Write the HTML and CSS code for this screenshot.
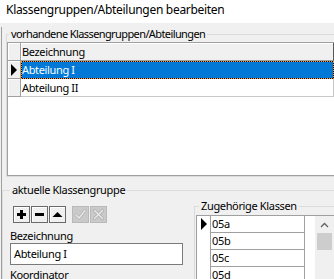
FILE: index.html
```html
<!DOCTYPE html>
<html lang="de">
<head>
<meta charset="utf-8">
<title>Klassengruppen/Abteilungen bearbeiten</title>
<link rel="stylesheet" href="styles.css">
</head>
<body>
<div class="titlebar">Klassengruppen/Abteilungen bearbeiten</div>
<div class="client">
  <fieldset class="group g1">
    <legend>vorhandene Klassengruppen/Abteilungen</legend>
    <div class="grid">
      <div class="row head"><div class="ind"></div><div class="cell">Bezeichnung</div></div>
      <div class="row sel"><div class="ind"><span class="arrow"></span></div><div class="cell">Abteilung I</div></div>
      <div class="row"><div class="ind"></div><div class="cell">Abteilung II</div></div>
    </div>
  </fieldset>
  <fieldset class="group g2">
    <legend>aktuelle Klassengruppe</legend>
    <div class="cols">
      <div class="leftcol">
        <div class="toolbar">
          <span class="btn"><svg width="15" height="15" viewBox="0 0 15 15"><path d="M3 6h9v3H3zM6 3h3v9H6z" fill="#000"/></svg></span>
          <span class="btn"><svg width="15" height="15" viewBox="0 0 15 15"><path d="M3 6h9v3H3z" fill="#000"/></svg></span>
          <span class="btn"><svg width="15" height="15" viewBox="0 0 15 15"><path d="M2.5 10h10L7.5 5z" fill="#000"/></svg></span>
          <span class="btn off gapl"><svg width="15" height="15" viewBox="0 0 15 15"><polyline points="3,8 6,11 12,3.5" fill="none" stroke="#b4b4b4" stroke-width="3" stroke-linecap="round" stroke-linejoin="round"/><polyline points="3,8 6,11 12,3.5" fill="none" stroke="#e9e9e9" stroke-width="1.4" stroke-linecap="round" stroke-linejoin="round"/></svg></span>
          <span class="btn off"><svg width="15" height="15" viewBox="0 0 15 15"><path d="M3.5 3.5l8 8M11.5 3.5l-8 8" fill="none" stroke="#b4b4b4" stroke-width="3.2" stroke-linecap="round"/><path d="M3.5 3.5l8 8M11.5 3.5l-8 8" fill="none" stroke="#e9e9e9" stroke-width="1.4" stroke-linecap="round"/></svg></span>
        </div>
        <div class="label first">Bezeichnung</div>
        <div class="input">Abteilung I</div>
        <div class="label">Koordinator</div>
      </div>
      <fieldset class="group g3">
        <legend>Zugehörige Klassen</legend>
        <div class="kgrid">
          <div class="klist">
            <div class="krow"><div class="kind"><span class="arrow"></span></div><div class="kcell">05a</div></div>
            <div class="krow"><div class="kind"></div><div class="kcell">05b</div></div>
            <div class="krow"><div class="kind"></div><div class="kcell">05c</div></div>
            <div class="krow"><div class="kind"></div><div class="kcell">05d</div></div>
          </div>
          <div class="kspace"></div>
          <div class="vscroll">
            <div class="sbtn"><svg width="9" height="6" viewBox="0 0 9 6"><polyline points="1,5 4.5,1.5 8,5" fill="none" stroke="#606060" stroke-width="1.3"/></svg></div>
            <div class="thumb"></div>
          </div>
        </div>
      </fieldset>
    </div>
  </fieldset>
</div>
</body>
</html>
```
FILE: styles.css
```css
* { box-sizing: border-box; }
html, body { margin: 0; padding: 0; }
body {
  width: 334px;
  height: 279px;
  overflow: hidden;
  background: #f0f0f0;
  font-family: "Noto Sans", "Open Sans", sans-serif;
  font-size: 11px;
  line-height: 14px;
  letter-spacing: -0.35px;
  color: #000;
}
.titlebar {
  height: 23px;
  background: #fff;
  padding: 3px 0 0 6px;
  font-size: 12px;
  letter-spacing: -0.3px;
}
.client {
  margin-left: 1px;
  border-left: 1px solid #a0a0a0;
  height: 256px;
}
.group {
  margin: 0;
  padding: 0;
  min-width: 0;
  border: 1px solid #dcdcdc;
}
.group legend {
  padding: 0 2px;
  line-height: 14px;
}
.g1 {
  margin: 4px 0 0 4px;
  border-right: none;
  padding-top: 1px;
}
.g1 legend { margin-left: 2px; letter-spacing: -0.6px; }
.grid {
  height: 134px;
  background: #fff;
  border: 1px solid #a0a0a0;
  border-right: none;
}
.row {
  display: flex;
  height: 18px;
}
.ind {
  flex: 0 0 13px;
  background: #f0f0f0;
  border-right: 1px solid #a0a0a0;
  border-bottom: 1px solid #a0a0a0;
  box-shadow: inset 1px 1px 0 #fff;
  position: relative;
}
.cell {
  flex: 1;
  padding-left: 1px;
  line-height: 17px;
  border-right: 1px solid #c8c8c8;
  border-bottom: 1px solid #c8c8c8;
}
.head .cell {
  background: #f0f0f0;
  border-right: 1px solid #5a5a5a;
  border-bottom: 1px solid #a0a0a0;
  box-shadow: inset 1px 1px 0 #fff;
}
.sel .cell {
  color: #fff;
  padding-left: 0;
  line-height: 16px;
  border: 1px dotted #ff9a1e;
  background: linear-gradient(#0078d7, #0078d7) padding-box, #000 border-box;
}
.arrow {
  position: absolute;
  left: 3px;
  top: 3px;
  width: 0;
  height: 0;
  border-left: 6px solid #000;
  border-top: 6px solid transparent;
  border-bottom: 6px solid transparent;
}
.g2 {
  margin: 6px 0 0 0;
  border-right: none;
  border-bottom: none;
}
.g2 legend { margin-left: 7px; }
.cols {
  display: flex;
  align-items: flex-start;
}
.leftcol {
  flex: 0 0 191px;
  padding: 9px 0 0 7px;
}
.toolbar {
  display: flex;
  gap: 1px;
  margin-left: 3px;
}
.btn {
  width: 17px;
  height: 17px;
  border: 1px solid #6a6a6a;
  background: #f0f0f0;
  box-shadow: inset 1px 1px 0 #fff;
  display: flex;
}
.btn.off {
  background: #cacaca;
  border-color: #b9b9b9;
  box-shadow: none;
}
.btn.gapl { margin-left: 5px; }
.label.first { margin-top: 6px; }
.label { margin-top: 3px; }
.input {
  width: 173px;
  height: 22px;
  background: #fff;
  border: 1px solid #7a7a7a;
  padding: 3px 0 0 3px;
}
.g3 {
  flex: 1;
  margin-top: 2px;
  border-right: none;
  border-bottom: none;
  padding: 2px 0 0 1px;
}
.g3 legend { margin-left: 3px; }
.kgrid {
  display: flex;
  background: #fff;
  border-left: 1px solid #a0a0a0;
  border-top: 1px solid #a0a0a0;
  height: 70px;
}
.klist { flex: 0 0 108px; }
.krow {
  display: flex;
  height: 17px;
}
.kind {
  flex: 0 0 13px;
  position: relative;
}
.kind .arrow { left: 4px; top: 2px; }
.kcell {
  flex: 0 0 95px;
  border: 1px solid #a0a0a0;
  border-top: none;
  padding-left: 1px;
  line-height: 16px;
}
.kspace { flex: 0 0 10px; }
.vscroll {
  flex: 0 0 19px;
  background: #f0f0f0;
}
.sbtn {
  height: 17px;
  display: flex;
  align-items: center;
  justify-content: center;
}
.thumb {
  height: 17px;
  margin: 0 2px;
  background: #cdcdcd;
}
```
